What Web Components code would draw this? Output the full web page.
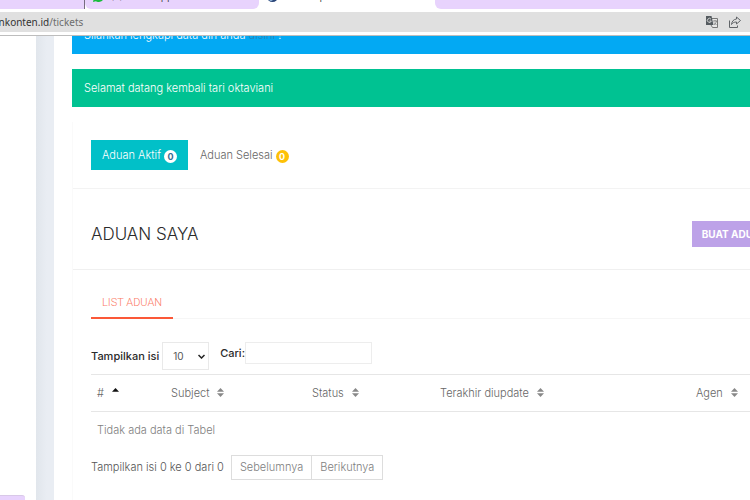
<!DOCTYPE html>
<html lang="id">
<head>
<meta charset="utf-8">
<title>Aduan Saya</title>
<style>
html,body{height:100%}
body{margin:0;overflow:hidden;background:#fff;color:#666;font:300 11px/18px Inter,"Open Sans",sans-serif}
</style>
</head>
<body>
<browser-window>
  <browser-tab slot="tabs" class="first" tone="lilac"></browser-tab>
  <browser-tab slot="tabs" tone="lilac" icon="chat" style="--w:174px">(5) WhatsApp</browser-tab>
  <browser-tab slot="tabs" icon="page" style="--w:176px">Desa Cipta Konten</browser-tab>
  <browser-tab slot="tabs" tone="lilac" class="last"></browser-tab>
  <address-bar slot="address" host="ankonten.id" path="/tickets"></address-bar>
  <ticket-page></ticket-page>
</browser-window>

<script>
const define = (name, html, setup) => customElements.define(name, class extends HTMLElement {
  constructor() {
    super();
    const t = document.createElement('template');
    t.innerHTML = '<style>:host,*{box-sizing:border-box}</style>' + html;
    this.attachShadow({mode: 'open'}).append(t.content.cloneNode(true));
  }
  connectedCallback() { if (setup) setup(this, this.shadowRoot); }
});

define('browser-tab', `
<style>
:host{display:flex;align-items:flex-end;flex:0 0 var(--w,auto);height:30px;padding:0 17px 7px;gap:7px;background:#fff;color:#444;font:400 10px/14px "Open Sans",sans-serif;white-space:nowrap;border-radius:0 0 6px 6px}
:host([tone=lilac]){background:#e8d3fd}
:host(.first){flex-basis:85px;border-right:1px solid #776c80;border-radius:0}
:host(.last){flex:1;border-radius:0 0 0 6px}
svg{display:none;width:11px;height:11px;flex:none}
:host([icon=chat]) .chat,:host([icon=page]) .page{display:block}
:host([icon]){padding-left:8px}
</style>
<svg class="chat" viewBox="0 0 11 11"><path fill="#19bd3d" d="M5.5 0a5.5 5.5 0 1 1-2.6 10.3L0 11l.7-2.900A5.500 5.500 0 0 1 5.500 0z"/></svg>
<svg class="page" viewBox="0 0 11 11"><circle cx="5.500" cy="5.500" r="5.500" fill="#294578"/><circle cx="4" cy="8" r="2" fill="#93b7dc"/></svg>
<slot></slot>`);

define('address-bar', `
<style>
:host{display:block;background:#fff;padding:3px 0;border-bottom:1px solid #bdbdbd}
.bar{display:flex;align-items:center;height:20px;background:#e0e0e0;color:#6d6d6d;font:400 10px/20px "Noto Sans","Open Sans",sans-serif;padding-right:9px;gap:11px;overflow:hidden}
.url{flex:1;margin-left:-7px}
.host{color:#333}
button{border:0;background:none;padding:0;display:flex}
svg{display:block;width:12px;height:12px}
</style>
<div class="bar"><div class="url"><span class="host"></span><span class="path"></span></div>
<button aria-label="Terjemahkan"><svg viewBox="0 0 12 12"><path d="M5 2.500h6.500v9H6.500L5 9" fill="#e8e8e8" stroke="#777"/><path d="M7 5h4M9 4v1M10.500 5c-.5 2-1.500 3-2.500 4M8 6.500l2.500 2.500" stroke="#777" stroke-width=".8" fill="none"/><path d="M0 0h5.500l2 9H0z" fill="#555b60"/><path d="M5 3.200A2 2 0 1 0 5.300 5H3.500" fill="none" stroke="#e0e0e0" stroke-width=".9"/></svg></button>
<button aria-label="Bagikan"><svg viewBox="0 0 12 12" fill="none" stroke="#606468"><path d="M.5 4.500v7h8V9.500"/><path stroke-linejoin="round" d="M7.500 1l4 3.500-4 3.500V6C5 6 3.500 6.800 2.500 8.500 2.800 5.500 4.500 3.300 7.500 3z"/></svg></button></div>`,
(el, r) => { r.querySelector('.host').textContent = el.getAttribute('host'); r.querySelector('.path').textContent = el.getAttribute('path'); });

define('browser-window', `
<style>
:host{display:flex;flex-direction:column;height:100vh;overflow:hidden;position:relative}
.tabs{display:flex;align-items:flex-end;height:9px;overflow:hidden;flex:none}
.view{flex:1;min-height:0;overflow:hidden}
.status{position:absolute;left:0;bottom:0;width:25px;height:5px;background:#e8d3fd;border-top:1px solid #d8c8e8;border-radius:0 3px 0 0}
</style>
<div class="tabs"><slot name="tabs"></slot></div>
<slot name="address"></slot>
<div class="view"><slot></slot></div>
<div class="status"></div>`);

define('alert-banner', `
<style>
:host{display:block;padding:10px 12px;background:#00c292;color:#fff}
:host([tone=info]){background:#03a9f3}
::slotted(a){color:#2b83b5;text-decoration:none}
</style><slot></slot>`);

define('count-badge', `
<style>
:host{display:inline-block;width:13px;height:13px;border-radius:50%;background:#fff;color:#376b91;font:700 9px/13px Inter,sans-serif;text-align:center}
:host([tone=warning]){background:#fec107;color:#fff}
</style><slot></slot>`);

define('status-tabs', `
<style>
:host{display:flex;gap:1px;padding:18px;border-bottom:1px solid #f3f3f3}
button{display:flex;align-items:center;gap:3px;height:30px;padding:0 11px;border:0;background:none;color:inherit;font:inherit}
button[aria-selected=true]{background:#01c0c8;color:#fff}
count-badge{margin-top:3px}
</style>
<button role="tab" aria-selected="true">Aduan Aktif <count-badge>0</count-badge></button>
<button role="tab" aria-selected="false">Aduan Selesai <count-badge tone="warning">0</count-badge></button>`);

define('page-heading', `
<style>
:host{display:flex;align-items:center;justify-content:space-between;height:81px;padding:10px 18px 0;border-bottom:1px solid #f0f0f0}
h1{margin:0;font:300 17px/24px Inter,sans-serif;color:#2b2b2b}
button{height:26px;padding:0 10px;border:0;background:#bda2e8;color:#fff;font:700 10px/26px Inter,sans-serif;white-space:nowrap}
</style>
<h1><slot></slot></h1><button>BUAT ADUAN</button>`);

define('list-tabs', `
<style>
:host{display:flex;border-bottom:1px solid #f6f6f6}
a{padding:8px 11px 5px;margin-bottom:-1px;border-bottom:2px solid #fb5838;color:#fb7c67;text-decoration:none;font:300 11px/18px Roboto,sans-serif}
</style><a href="#list"><slot></slot></a>`);

define('table-tools', `
<style>
:host{display:flex;align-items:flex-start;gap:11px;color:#2b2b2b;font-weight:500}
label{display:flex;align-items:center}
.len{gap:3px}
.pick{position:relative;display:flex;align-items:center}
select{appearance:none;width:47px;height:28px;padding:0 0 0 10px;border:1px solid #e9e9e9;border-radius:0;background:#fff;color:#555;font:400 10px Inter,sans-serif}
svg{position:absolute;right:4px;width:7px;height:5px;pointer-events:none}
input{width:127px;height:22px;border:1px solid #ededed;background:#fff;padding:0 6px;font:inherit}
</style>
<label class="len">Tampilkan isi <span class="pick"><select><option>10</option><option>25</option></select><svg viewBox="0 0 7 5"><path d="M.5 1l3 3 3-3" fill="none" stroke="#222" stroke-width="1.500"/></svg></span></label>
<label>Cari:<input type="search"></label>`);

define('sort-mark', `
<style>:host{display:inline-block;margin-left:8px}svg{display:block;width:7px;height:9px}path{fill:#888}
:host([dir=asc]) .up{fill:#111}:host([dir=asc]) .down{display:none}</style>
<svg viewBox="0 0 7 9"><path class="up" d="M0 3.700L3.500 0 7 3.700z"/><path class="down" d="M0 5.300h7L3.500 9z"/></svg>`);

define('ticket-table', `
<style>
:host{display:block}
table{width:100%;border-collapse:collapse;table-layout:fixed}
th,td{padding:9px 6px;text-align:left;font-weight:300;white-space:nowrap;height:37px}
thead tr{border-top:1px solid #e6e6e6;border-bottom:1px solid #e6e6e6}
td{color:#808080}
.n{width:74px}.s{width:141px}.t{width:128px}.u{width:256px}
</style>
<table><thead><tr><th class="n">#<sort-mark dir="asc"></sort-mark></th><th class="s">Subject<sort-mark></sort-mark></th><th class="t">Status<sort-mark></sort-mark></th><th class="u">Terakhir diupdate<sort-mark></sort-mark></th><th>Agen<sort-mark></sort-mark></th></tr></thead>
<tbody><tr><td colspan="5">Tidak ada data di Tabel</td></tr></tbody></table>`);

define('table-footer', `
<style>
:host{display:flex;align-items:center;gap:7px;color:#555}
nav{display:flex}
button{height:25px;padding:0 8px;border:1px solid #ddd;background:#fff;color:#808080;font:inherit}
button + button{margin-left:-1px}
</style>
<slot></slot><nav><button>Sebelumnya</button><button>Berikutnya</button></nav>`);

define('ticket-page', `
<style>
:host{display:flex;height:100%}
.side{flex:0 0 36px;background:#fff}
.gutter{flex:0 0 18px;background:linear-gradient(90deg,#e1e6ec,#e9edf3 60%)}
main{flex:1;min-width:0;margin:-20px -46px 0 18px;display:flex;flex-direction:column;gap:15px}
.card{flex:1;border-left:1px solid #fafafa}
.list{padding:16px 18px 0}
list-tabs{margin-bottom:23px}table-tools{margin-bottom:4px}table-footer{margin-top:6px}
</style>
<div class="side"></div><div class="gutter"></div>
<main>
<alert-banner tone="info">Silahkan lengkapi data diri anda <a href="#profil">disini</a> !</alert-banner>
<alert-banner>Selamat datang kembali tari oktaviani</alert-banner>
<div class="card">
<status-tabs role="tablist"></status-tabs>
<page-heading>ADUAN SAYA</page-heading>
<div class="list">
<list-tabs>LIST ADUAN</list-tabs>
<table-tools></table-tools>
<ticket-table></ticket-table>
<table-footer>Tampilkan isi 0 ke 0 dari 0</table-footer>
</div></div>
</main>`);
</script>
</body>
</html>
